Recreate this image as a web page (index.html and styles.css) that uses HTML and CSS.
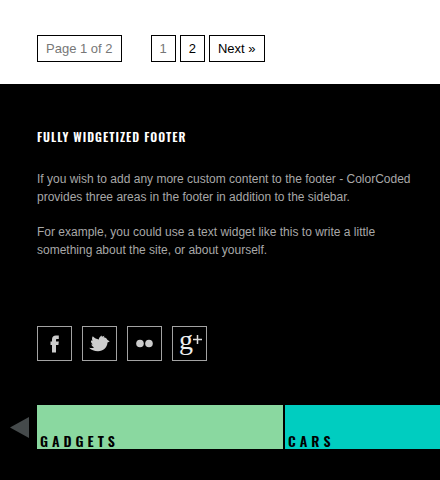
FILE: index.html
```html
<!DOCTYPE html>
<html lang="en">
<head>
<meta charset="utf-8">
<meta name="viewport" content="width=device-width, initial-scale=1">
<title>ColorCoded</title>
<link rel="stylesheet" href="styles.css">
</head>
<body>
<nav class="pagination" aria-label="Pages">
  <span class="page page-count">Page 1 of 2</span>
  <span class="page page-current" aria-current="page">1</span>
  <a class="page" href="#page-2">2</a>
  <a class="page" href="#page-2">Next »</a>
</nav>
<footer class="footer">
  <section class="widget">
    <h2 class="widget-title">FULLY WIDGETIZED FOOTER</h2>
    <p>If you wish to add any more custom content to the footer - ColorCoded provides three areas in the footer in addition to the sidebar.</p>
    <p>For example, you could use a text widget like this to write a little something about the site, or about yourself.</p>
  </section>
  <div class="social">
    <a class="social-link" href="#facebook" aria-label="Facebook">
      <svg viewBox="0 0 33 33" aria-hidden="true"><path d="M14 25.500V18H12.500V14.500H14V12.500C14 9.600 15.500 8.500 18 8.500H20.800V12H19C18.200 12 18 12.400 18 13.100V14.500H20.800L20.400 18H18V25.500Z"/></svg>
    </a>
    <a class="social-link" href="#twitter" aria-label="Twitter">
      <svg viewBox="0 0 33 33" aria-hidden="true"><path d="M6 20.800C8.200 21.400 10.100 21 11.100 20.200C9.500 19.700 8.600 18.700 8.300 17.500L9.800 17.300C8.200 16.200 7.800 14.800 8 13.400L9.500 13.800C8.800 12.200 8.900 10.500 9.800 9.300C11.600 11.100 13.500 12.200 15.800 12.600C15.900 10.900 17 9.600 18.900 8.600L18.800 9.700L21.500 8.800L20.600 10.200C22.400 10.200 23.700 11.200 24.300 12.700L26.700 14.600L24.500 15.600C24.100 21 20.400 24.200 15 24.200C11.400 24.200 8.200 23 6 20.800Z"/></svg>
    </a>
    <a class="social-link" href="#flickr" aria-label="Flickr">
      <svg viewBox="0 0 33 33" aria-hidden="true"><circle cx="12" cy="16.500" r="3.800"/><circle cx="21" cy="16.500" r="3.800"/></svg>
    </a>
    <a class="social-link" href="#google-plus" aria-label="Google Plus">
      <svg viewBox="0 0 33 33" aria-hidden="true"><text class="google-g" x="6" y="22">g</text><path class="google-plus" d="M20 12.500H29M24.500 8V17"/></svg>
    </a>
  </div>
  <div class="carousel">
    <button class="carousel-prev" type="button" aria-label="Previous">
      <svg viewBox="0 0 19 21" aria-hidden="true"><path d="M0 10.500L19 0V21Z"/></svg>
    </button>
    <div class="tiles">
      <a class="tile tile-gadgets" href="#gadgets">GADGETS</a>
      <a class="tile tile-cars" href="#cars">CARS</a>
    </div>
  </div>
</footer>
</body>
</html>
```
FILE: styles.css
```css
* {
  box-sizing: border-box;
}

body {
  margin: 0;
  background: #000;
  font-family: "Liberation Sans", Arial, sans-serif;
  font-size: 13px;
  line-height: 18px;
}

.pagination {
  display: flex;
  gap: 4px;
  padding: 35px 37px 22px;
  background: #fff;
}

.page {
  padding: 4px 8px 3px;
  border: 1px solid #000;
  color: #000;
  text-decoration: none;
}

.page-count,
.page-current {
  color: #777;
}

.page-count {
  margin-right: 25px;
}

.footer {
  padding-top: 44px;
  background: #000;
  color: #a8a8a8;
}

.widget {
  padding: 0 20px 0 37px;
  font-size: 12px;
}

.widget-title {
  margin: 0 0 24px;
  color: #fff;
  font-family: Oswald, sans-serif;
  font-size: 12px;
  font-weight: 600;
  letter-spacing: 1px;
}

.widget p {
  margin: 0 0 17px;
}

.social {
  display: flex;
  gap: 10px;
  padding: 50px 37px 44px;
}

.social-link {
  width: 35px;
  height: 35px;
  border: 1px solid #a3a3a3;
  fill: #ccc;
}

.social-link svg {
  display: block;
  overflow: visible;
}

.google-g {
  fill: #eee;
  font-family: "Liberation Serif", serif;
  font-size: 28px;
}

.google-plus {
  fill: none;
  stroke: #ddd;
  stroke-width: 1.5;
}

.carousel {
  display: flex;
  align-items: center;
  gap: 8px;
  padding: 0 0 24px 10px;
  overflow: hidden;
}

.carousel-prev {
  flex: none;
  width: 19px;
  padding: 0;
  border: 0;
  background: none;
  fill: #454a4b;
}

.carousel-prev svg {
  display: block;
}

.tiles {
  display: flex;
  flex: 1;
  gap: 2px;
  min-width: 0;
}

.tile {
  display: flex;
  flex: none;
  align-items: flex-end;
  width: 246px;
  height: 44px;
  padding-left: 3px;
  color: #000;
  font-family: Oswald, sans-serif;
  font-size: 14px;
  font-weight: 600;
  line-height: 17px;
  letter-spacing: 4px;
  text-decoration: none;
}

.tile-gadgets {
  background: #8ad8a0;
}

.tile-cars {
  background: #00cdc0;
}
```
